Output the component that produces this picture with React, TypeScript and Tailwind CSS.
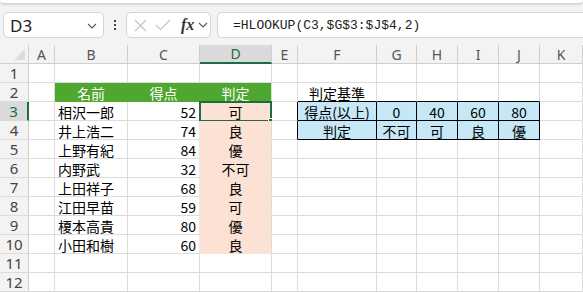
import React from 'react';

const COLS = ['A', 'B', 'C', 'D', 'E', 'F', 'G', 'H', 'I', 'J', 'K'];

const names = ['相沢一郎', '井上浩二', '上野有紀', '内野武', '上田祥子', '江田早苗', '榎本高貴', '小田和樹'];
const scores = [52, 74, 84, 32, 68, 59, 80, 60];
const grades = ['可', '良', '優', '不可', '良', '可', '優', '良'];

const lookup: Record<string, string[]> = {
  '3': ['得点(以上)', '0', '40', '60', '80'],
  '4': ['判定', '不可', '可', '良', '優'],
};

type CellSpec = {
  text?: string;
  align: 'left' | 'center' | 'right';
  bg: string;
  right: string;
  bottom: string;
  color: string;
};

function cellSpec(row: number, col: string): CellSpec {
  const spec: CellSpec = {
    align: 'left',
    bg: 'bg-white',
    right: 'border-r-[#dcdcdc]',
    bottom: 'border-b-[#dcdcdc]',
    color: 'text-black',
  };

  // header band
  if (row === 2 && ['B', 'C', 'D'].includes(col)) {
    spec.bg = 'bg-[#4ea72e]';
    spec.color = 'text-white';
    spec.align = 'center';
    spec.bottom = 'border-b-[#4ea72e]';
    if (col !== 'D') spec.right = 'border-r-[#4ea72e]';
    spec.text = col === 'B' ? '名前' : col === 'C' ? '得点' : '判定';
  }

  if (row >= 3 && row <= 10) {
    const i = row - 3;
    if (col === 'B') spec.text = names[i];
    if (col === 'C') {
      spec.text = String(scores[i]);
      spec.align = 'right';
      spec.right = 'border-r-[#fbe2d5]';
    }
    if (col === 'D') {
      spec.text = grades[i];
      spec.align = 'center';
      spec.bg = 'bg-[#fbe2d5]';
      spec.bottom = 'border-b-[#fbe2d5]';
    }
  }

  // criteria table
  if (row === 2 && col === 'F') {
    spec.text = '判定基準';
    spec.align = 'center';
  }
  if (row === 2 && ['F', 'G', 'H', 'I', 'J'].includes(col)) spec.bottom = 'border-b-black';
  if ((row === 3 || row === 4) && col === 'E') spec.right = 'border-r-black';
  if ((row === 3 || row === 4) && ['F', 'G', 'H', 'I', 'J'].includes(col)) {
    const idx = ['F', 'G', 'H', 'I', 'J'].indexOf(col);
    spec.text = lookup[String(row)][idx];
    spec.align = 'center';
    spec.bg = 'bg-[#c6e7f6]';
    spec.right = 'border-r-black';
    spec.bottom = 'border-b-black';
  }

  return spec;
}

function Cell({ row, col }: { row: number; col: string }) {
  const s = cellSpec(row, col);
  const align = s.align === 'center' ? 'justify-center' : s.align === 'right' ? 'justify-end' : 'justify-start';
  const selected = row === 3 && col === 'D';
  return (
    <div
      className={`relative flex items-center h-[19px] px-[3px] border-r border-b whitespace-nowrap text-[14px] leading-[18px] ${align} ${s.bg} ${s.right} ${s.bottom} ${s.color}`}
    >
      {s.text && <span className="pt-[1px]">{s.text}</span>}
      {selected && (
        <>
          <div className="absolute -left-[1px] -top-[1px] w-[73px] h-[21px] border-2 border-[#1e6c41]" />
          <div className="absolute left-[68px] top-[16px] w-[7px] h-[7px] bg-[#1e6c41] border border-white" />
        </>
      )}
    </div>
  );
}

function Chevron({ className }: { className?: string }) {
  return (
    <svg className={className} width="10" height="6" viewBox="0 0 10 6" fill="none">
      <path d="M1 1l4 4 4-4" stroke="#555" strokeWidth="1.1" />
    </svg>
  );
}

function FormulaBar() {
  return (
    <div className="relative h-[45px] bg-[#f3f3f3]">
      <div className="absolute left-0 right-0 top-0 h-[4px] bg-white border-b border-[#d2d2d2] rounded-b-[6px] shadow-[0_1px_2px_rgba(0,0,0,0.12)]" />
      <div className="absolute top-[12px] flex h-[26px] left-[3px] right-0 gap-0">
        <div className="flex items-center justify-between w-[101px] h-full bg-white border border-[#d4d4d4] rounded-[5px] pl-[6px] pr-[6px]">
          <span className="text-[17px] text-[#222] font-['Noto_Sans',sans-serif] leading-none">D3</span>
          <Chevron className="mt-[2px]" />
        </div>
        <div className="flex flex-col items-center justify-center gap-[2px] w-[22px]">
          <span className="w-[2px] h-[2px] bg-[#444]" />
          <span className="w-[2px] h-[2px] bg-[#444]" />
          <span className="w-[2px] h-[2px] bg-[#444]" />
        </div>
        <div className="flex items-center w-[85px] h-full bg-white border border-[#d4d4d4] rounded-[5px] pl-[7px]">
          <svg width="13" height="13" viewBox="0 0 13 13" fill="none">
            <path d="M1 1l11 11M12 1L1 12" stroke="#c4c4c4" strokeWidth="1.1" />
          </svg>
          <svg className="ml-[8px]" width="16" height="12" viewBox="0 0 16 12" fill="none">
            <path d="M1 6l4.5 4.5L15 1" stroke="#c4c4c4" strokeWidth="1.1" />
          </svg>
          <span className="ml-[10px] text-[16px] italic font-semibold font-['Liberation_Serif',serif] text-[#333] leading-none">fx</span>
          <Chevron className="ml-[4px]" />
        </div>
        <div className="flex items-center flex-1 ml-[6px] h-full bg-white border border-r-0 border-[#d4d4d4] rounded-l-[5px] pl-[15px]">
          <span className="text-[13px] font-['Liberation_Mono',monospace] text-[#222] leading-none">=HLOOKUP(C3,$G$3:$J$4,2)</span>
        </div>
      </div>
    </div>
  );
}

export default function App() {
  const rows = Array.from({ length: 12 }, (_, i) => i + 1);
  return (
    <div className="w-[583px] h-[293px] overflow-hidden bg-white font-['Noto_Sans_CJK_JP','Noto_Sans',sans-serif]">
      <FormulaBar />
      <div className="grid grid-cols-[29px_26px_73px_72px_72px_26px_79px_40px_41px_41px_41px_1fr]">
        {/* column headers */}
        <div className="relative h-[19px] bg-[#f3f3f3] border-r border-b border-[#cfcfcf]">
          <div className="absolute right-[3px] bottom-[3px] w-0 h-0 border-l-[11px] border-l-transparent border-b-[11px] border-b-[#dcdcdc]" />
        </div>
        {COLS.map((c) =>
          c === 'D' ? (
            <div
              key={c}
              className="flex items-center justify-center h-[19px] bg-[#dadada] border-r border-r-[#cfcfcf] border-b-2 border-b-[#1e6c41] text-[14px] text-[#1e6c41] font-['Noto_Sans',sans-serif]"
            >
              {c}
            </div>
          ) : (
            <div
              key={c}
              className="flex items-center justify-center h-[19px] bg-[#f3f3f3] border-r border-b border-[#cfcfcf] text-[14px] text-[#555] font-['Noto_Sans',sans-serif]"
            >
              {c}
            </div>
          )
        )}
        {rows.map((r) => (
          <React.Fragment key={r}>
            {r === 3 ? (
              <div className="flex items-center justify-center h-[19px] bg-[#dadada] border-r-2 border-r-[#1e6c41] border-b border-b-[#d8d8d8] text-[15px] text-[#1e6c41] font-['Noto_Sans',sans-serif]">
                {r}
              </div>
            ) : (
              <div className="flex items-center justify-center h-[19px] bg-[#f3f3f3] border-r border-r-[#cfcfcf] border-b border-b-[#dcdcdc] text-[15px] text-[#444] font-['Noto_Sans',sans-serif]">
                {r}
              </div>
            )}
            {COLS.map((c) => (
              <Cell key={c} row={r} col={c} />
            ))}
          </React.Fragment>
        ))}
      </div>
    </div>
  );
}
